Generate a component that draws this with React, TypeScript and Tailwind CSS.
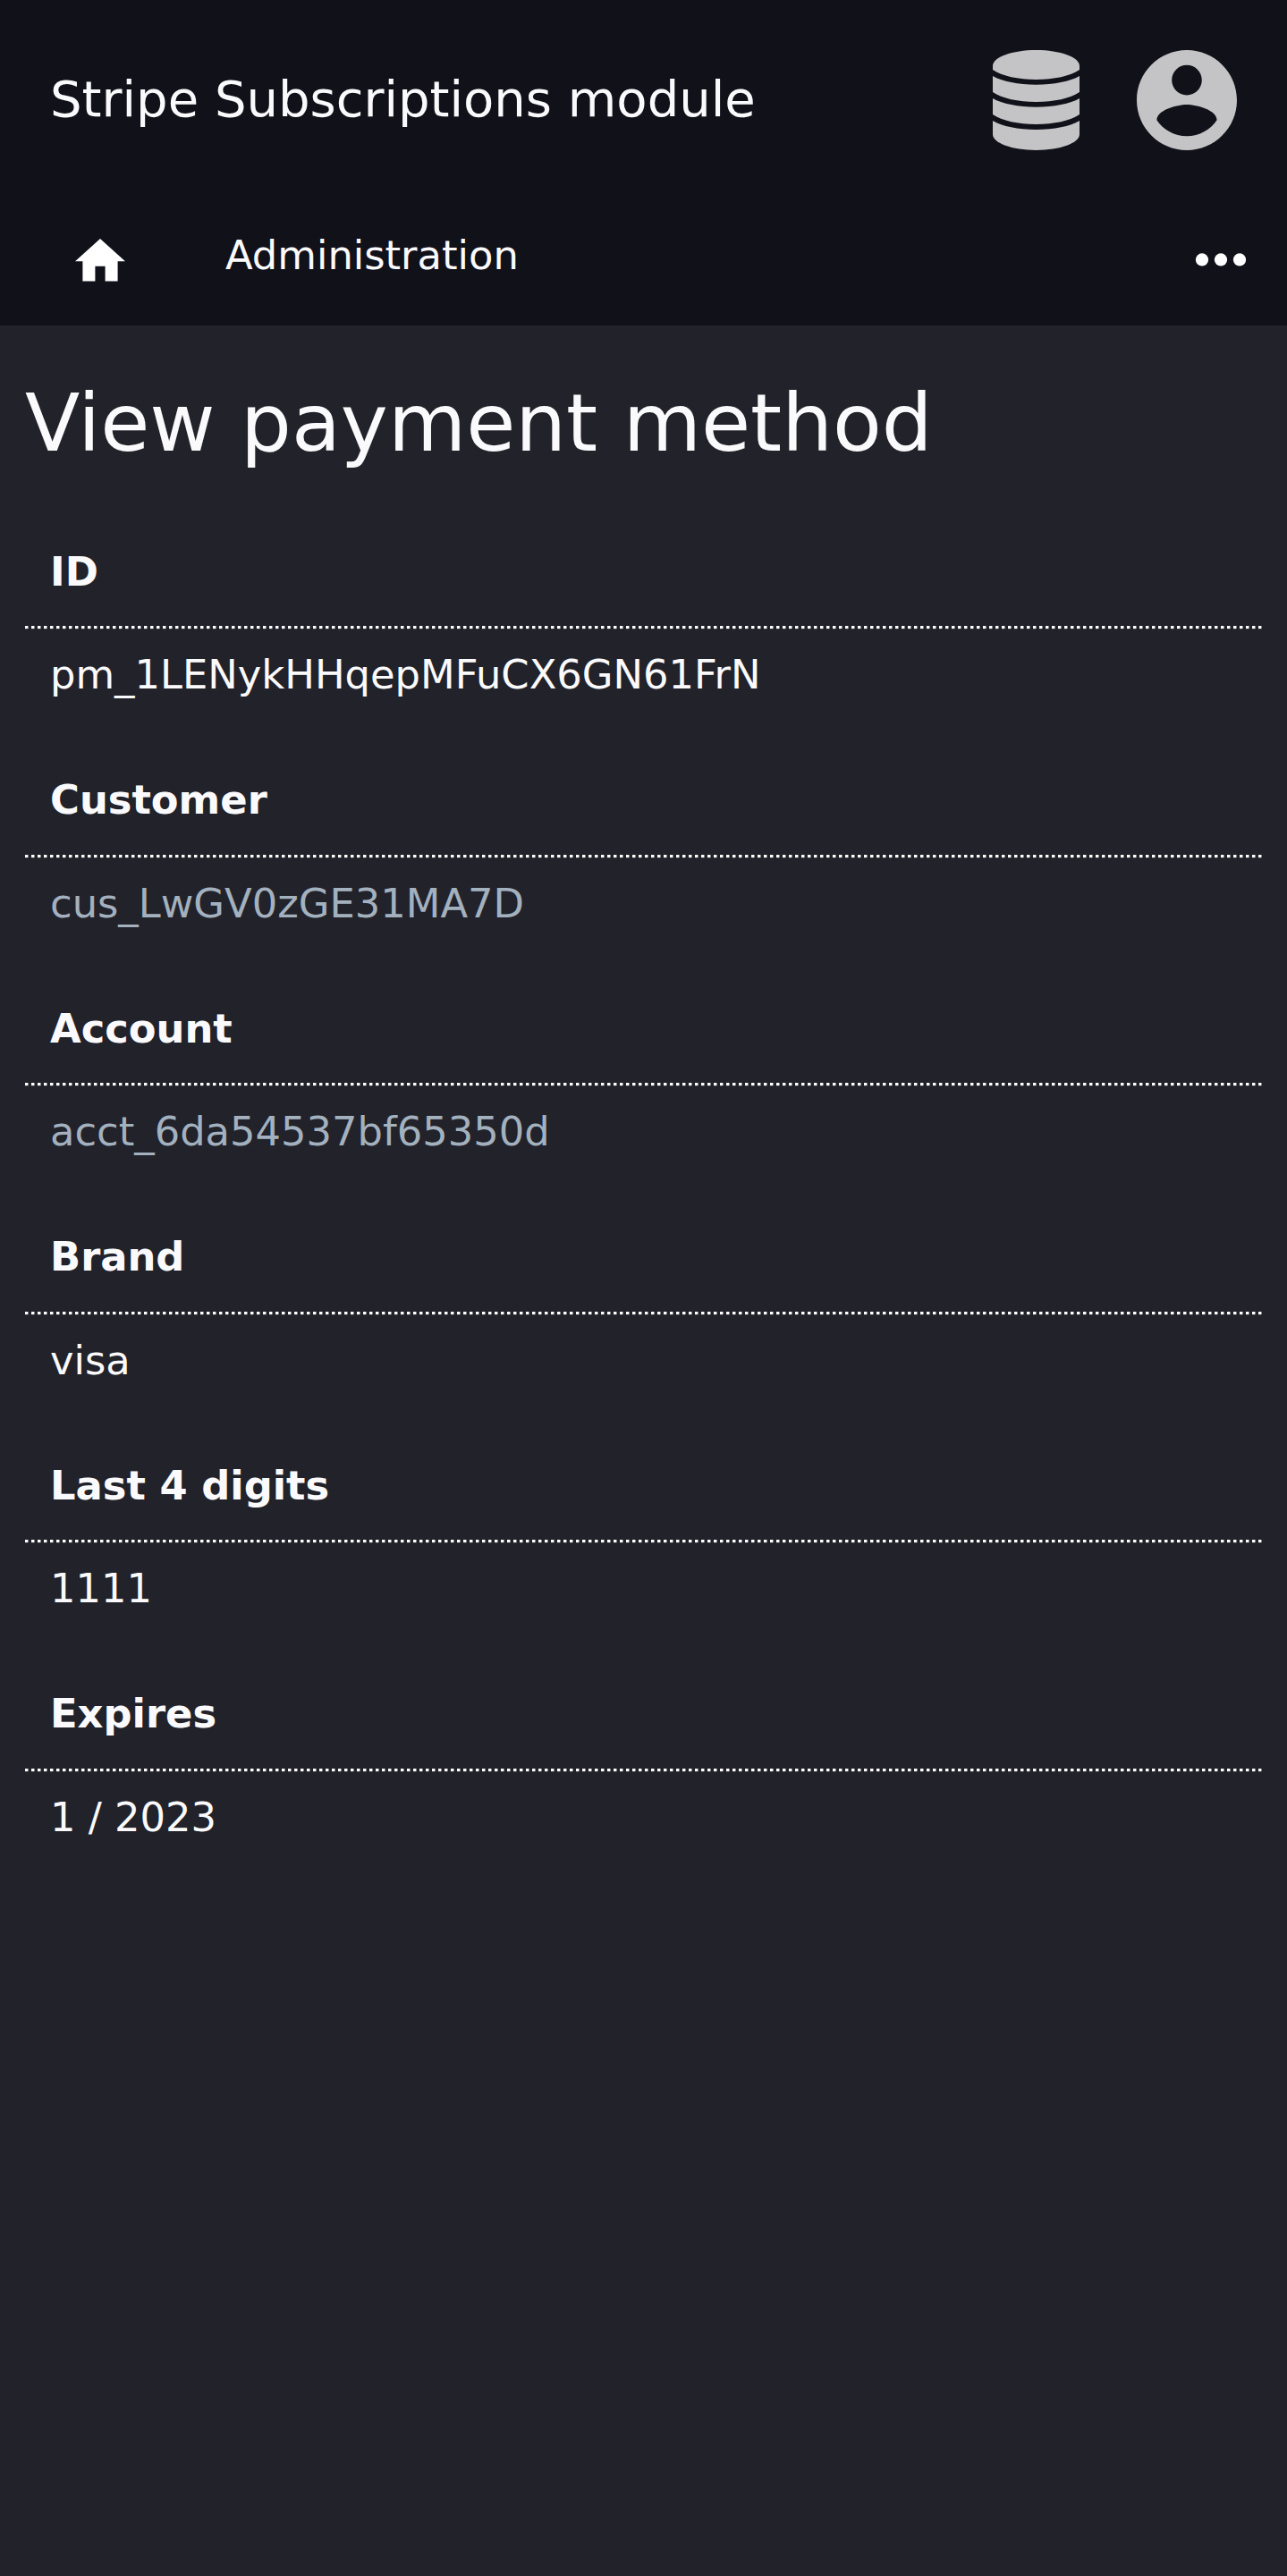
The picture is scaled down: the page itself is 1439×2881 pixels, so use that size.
const rows: [string, string, boolean][] = [
  ["ID", "pm_1LENykHHqepMFuCX6GN61FrN", false],
  ["Customer", "cus_LwGV0zGE31MA7D", true],
  ["Account", "acct_6da54537bf65350d", true],
  ["Brand", "visa", false],
  ["Last 4 digits", "1111", false],
  ["Expires", "1 / 2023", false],
];

function DottedRule() {
  return (
    <div className="h-[4px] w-[1383px]" aria-hidden="true">
      <div className="h-[3px] bg-[repeating-linear-gradient(90deg,#ffffff_0px,#ffffff_3px,#88888c_3px,#88888c_4px,transparent_4px,transparent_7px)]" />
      <div className="h-px opacity-15 bg-[repeating-linear-gradient(90deg,#ffffff_0px,#ffffff_3px,#88888c_3px,#88888c_4px,transparent_4px,transparent_7px)]" />
    </div>
  );
}

export default function App() {
  return (
    <div className="min-h-[2881px] bg-[#22222a] font-['DejaVu_Sans',sans-serif] text-[#fafafc]">
      <header className="h-[364px] bg-[#11111a]">
        <div className="flex h-[224px] items-center px-14">
          <div className="flex-1 pb-[3px] text-[56px] leading-[65px]">Stripe Subscriptions module</div>
          <svg className="mr-16 h-[112px] w-[97px]" viewBox="30 30 291 336" preserveAspectRatio="none" fill="#c4c4c6">
            <path d="M30 83C30 54 95 30 175.500 30S321 54 321 83V96C290 117 235 129 175.500 129S61 117 30 96Z" />
            <path d="M30 117C61 135 116 146 175.500 146S290 135 321 117V171C290 192 235 204 175.500 204S61 192 30 171Z" />
            <path d="M30 192C61 210 116 221 175.500 221S290 210 321 192V246C290 267 235 279 175.500 279S61 267 30 246Z" />
            <path d="M30 267C61 286 116 297 175.500 297S290 286 321 267V313C321 342 256 366 175.500 366S30 342 30 313Z" />
          </svg>
          <svg className="h-[112px] w-[112px]" viewBox="2 2 20 20" fill="#c4c4c6">
            <path d="M12 2C6.480 2 2 6.480 2 12s4.480 10 10 10 10-4.480 10-10S17.520 2 12 2zm0 3c1.660 0 3 1.340 3 3s-1.340 3-3 3-3-1.340-3-3 1.340-3 3-3zm0 14.200c-2.500 0-4.710-1.280-6-3.220.030-1.990 4-3.080 6-3.080 1.990 0 5.970 1.090 6 3.080-1.290 1.940-3.500 3.220-6 3.220z" />
          </svg>
        </div>
        <nav className="flex items-start pl-[84px] pr-[46px]">
          <svg className="mt-[43px] h-[48px] w-[56px]" viewBox="2 3 20 17.143" fill="white">
            <path d="M10 20v-6h4v6h5v-8h3L12 3 2 12h3v8z" />
          </svg>
          <span className="ml-28 mt-[35px] flex-1 text-[44.8px] leading-[53px]">Administration</span>
          <svg className="mt-[59px] h-[15px] w-[56px]" viewBox="0 0 56 15" fill="white">
            <circle cx="7" cy="7.4" r="7.1" />
            <circle cx="28" cy="7.4" r="7.1" />
            <circle cx="49" cy="7.4" r="7.1" />
          </svg>
        </nav>
      </header>
      <main className="px-7">
        <h1 className="pt-[57px] text-[89.6px] leading-[104px]">View payment method</h1>
        <dl className="pt-[60px] text-[44.8px] leading-[53px]">
          {rows.map(([label, value, link]) => (
            <div key={label} className="h-[255.5px]">
              <dt className="h-[115.1px] px-7 pt-[27.9px] font-bold">{label}</dt>
              <DottedRule />
              <dd className={link ? "px-7 pt-6 text-[#a3b1bf]" : "px-7 pt-6"}>{value}</dd>
            </div>
          ))}
        </dl>
      </main>
    </div>
  );
}
